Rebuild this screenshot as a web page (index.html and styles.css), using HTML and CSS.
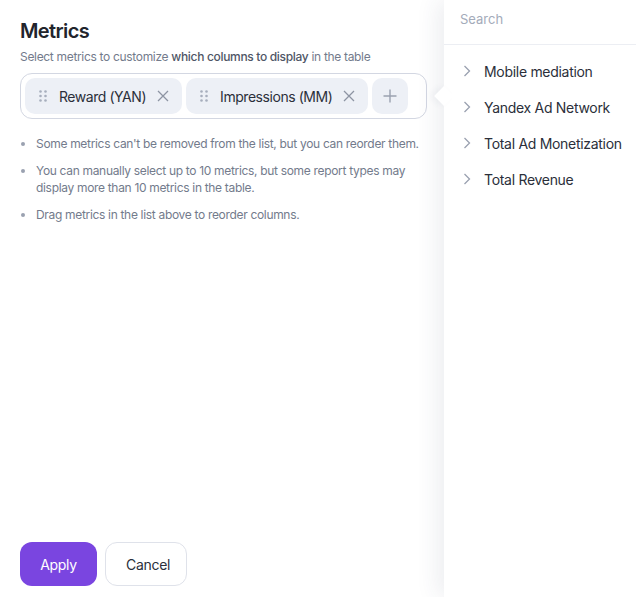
FILE: index.html
```html
<!DOCTYPE html>
<html lang="en">
<head>
    <meta charset="UTF-8">
    <meta name="viewport" content="width=device-width, initial-scale=1.0">
    <title>Metrics</title>
    <link rel="stylesheet" href="styles.css">
</head>
<body>
    <div class="panel">
        <h1 class="title">Metrics</h1>
        <p class="subtitle">Select metrics to customize <b>which columns to display</b> in the table</p>

        <div class="chip-box">
            <div class="chip">
                <svg class="handle" width="8" height="12" viewBox="0 0 8 12"><circle cx="1.5" cy="1.5" r="1.3"/><circle cx="6.5" cy="1.5" r="1.3"/><circle cx="1.5" cy="6" r="1.3"/><circle cx="6.5" cy="6" r="1.3"/><circle cx="1.5" cy="10.5" r="1.3"/><circle cx="6.5" cy="10.5" r="1.3"/></svg>
                <span class="chip-label">Reward (YAN)</span>
                <svg class="remove" width="12" height="12" viewBox="0 0 12 12"><path d="M1 1L11 11M11 1L1 11"/></svg>
            </div>
            <div class="chip">
                <svg class="handle" width="8" height="12" viewBox="0 0 8 12"><circle cx="1.5" cy="1.5" r="1.3"/><circle cx="6.5" cy="1.5" r="1.3"/><circle cx="1.5" cy="6" r="1.3"/><circle cx="6.5" cy="6" r="1.3"/><circle cx="1.5" cy="10.5" r="1.3"/><circle cx="6.5" cy="10.5" r="1.3"/></svg>
                <span class="chip-label">Impressions (MM)</span>
                <svg class="remove" width="12" height="12" viewBox="0 0 12 12"><path d="M1 1L11 11M11 1L1 11"/></svg>
            </div>
            <button class="chip-add">
                <svg width="14" height="14" viewBox="0 0 14 14"><path d="M7 0.5V13.5M0.5 7H13.5"/></svg>
            </button>
        </div>

        <ul class="notes">
            <li>Some metrics can't be removed from the list, but you can reorder them.</li>
            <li>You can manually select up to 10 metrics, but some report types may display more than 10 metrics in the table.</li>
            <li>Drag metrics in the list above to reorder columns.</li>
        </ul>

        <div class="actions">
            <button class="btn btn-apply">Apply</button>
            <button class="btn btn-cancel">Cancel</button>
        </div>
    </div>

    <div class="popover">
        <div class="popover-arrow"></div>
        <div class="search">Search</div>
        <ul class="groups">
            <li><svg width="8" height="12" viewBox="0 0 8 12"><path d="M1.5 1L6.5 6L1.5 11"/></svg>Mobile mediation</li>
            <li><svg width="8" height="12" viewBox="0 0 8 12"><path d="M1.5 1L6.5 6L1.5 11"/></svg>Yandex Ad Network</li>
            <li><svg width="8" height="12" viewBox="0 0 8 12"><path d="M1.5 1L6.5 6L1.5 11"/></svg>Total Ad Monetization</li>
            <li><svg width="8" height="12" viewBox="0 0 8 12"><path d="M1.5 1L6.5 6L1.5 11"/></svg>Total Revenue</li>
        </ul>
    </div>
</body>
</html>
```

FILE: styles.css
```css
body {
    margin: 0;
    height: 597px;
    overflow: hidden;
    font-family: Inter, 'Noto Sans', sans-serif;
    color: #21242c;
    background: #fff;
    position: relative;
}
.panel {
    width: 424px;
    height: 597px;
    box-sizing: border-box;
    padding: 18px 0 11px 20px;
    display: flex;
    flex-direction: column;
}
.title {
    margin: 0;
    font-size: 20px;
    font-weight: 600;
    line-height: 26px;
    letter-spacing: -0.6px;
    color: #21242c;
}
.subtitle {
    margin: 5px 0 0;
    font-size: 12px;
    line-height: 16px;
    color: #737b8c;
    letter-spacing: -0.32px;
}
.subtitle b {
    font-weight: 500;
    color: #4f5666;
}
.chip-box {
    margin-top: 8px;
    width: 407px;
    height: 46px;
    box-sizing: border-box;
    border: 1px solid #d3d7e2;
    border-radius: 12px;
    padding: 4px;
    display: flex;
    gap: 4px;
    align-items: center;
}
.chip {
    height: 36px;
    display: flex;
    align-items: center;
    background: #edf0f6;
    border-radius: 10px;
    padding: 0 13px 0 14px;
    font-size: 14px;
    color: #2b2f3a;
    letter-spacing: -0.45px;
}
.handle {
    fill: #a7aebd;
    margin-right: 12px;
}
.remove {
    stroke: #8d94a3;
    stroke-width: 1.3;
    margin-left: 11px;
}
.chip-add {
    width: 36px;
    height: 36px;
    border: none;
    background: #edf0f6;
    border-radius: 10px;
    display: flex;
    align-items: center;
    justify-content: center;
    padding: 0;
}
.chip-add svg {
    stroke: #9aa1b0;
    stroke-width: 1.4;
}
.notes {
    margin: 16px 0 0;
    padding: 0 0 0 16px;
    font-size: 12px;
    line-height: 17px;
    color: #737b8c;
    letter-spacing: -0.32px;
}
.notes li {
    margin-bottom: 10px;
}
.notes li::marker {
    color: #9aa1b0;
    font-size: 13px;
}
.actions {
    margin-top: auto;
    display: flex;
    gap: 8px;
}
.btn {
    height: 44px;
    border-radius: 12px;
    font-family: inherit;
    font-size: 14px;
    padding: 0 20px;
    letter-spacing: -0.3px;
}
.btn-apply {
    background: #7a45e0;
    border: none;
    color: #fff;
    width: 77px;
}
.btn-cancel {
    background: #fff;
    border: 1px solid #dfe2ea;
    color: #2b2f3a;
    width: 82px;
}
.popover {
    position: absolute;
    top: 0;
    left: 444px;
    right: 0;
    bottom: 0;
    background: #fff;
    box-shadow: -6px 0 22px rgba(40, 50, 90, 0.09);
}
.popover-arrow {
    position: absolute;
    left: -7px;
    top: 89px;
    width: 14px;
    height: 14px;
    background: #fff;
    transform: rotate(45deg);
    box-shadow: -3px 3px 6px rgba(40, 50, 90, 0.05);
}
.search {
    position: relative;
    height: 45px;
    box-sizing: border-box;
    padding: 11px 0 0 16px;
    font-size: 13px;
    color: #a4abba;
    border-bottom: 1px solid #eceef3;
    background: #fff;
}
.groups {
    position: relative;
    list-style: none;
    margin: 0;
    padding: 8px 0 0;
}
.groups li {
    height: 36px;
    display: flex;
    align-items: center;
    padding-left: 19px;
    font-size: 14px;
    color: #2b2f3a;
    letter-spacing: -0.3px;
}
.groups svg {
    fill: none;
    stroke: #9aa1b0;
    stroke-width: 1.3;
    margin-right: 13px;
}
```
